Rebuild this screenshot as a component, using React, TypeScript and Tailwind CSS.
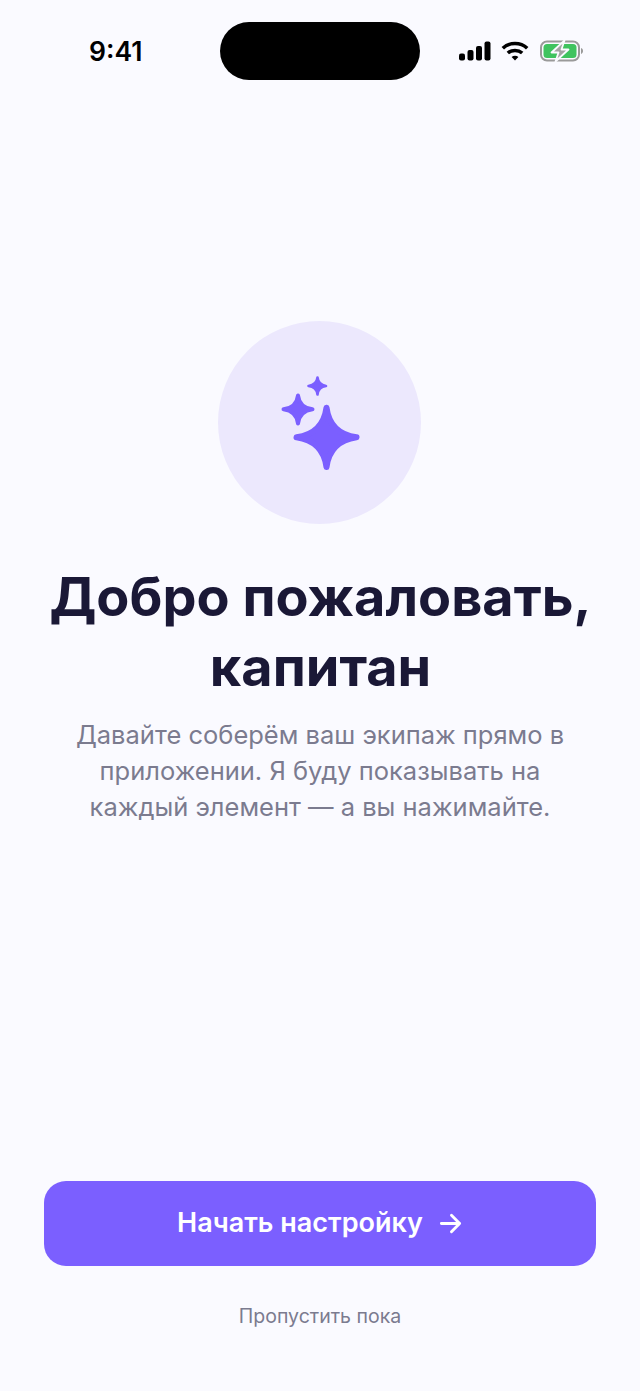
function SignalIcon() {
  return (
    <svg width="32" height="20" viewBox="0 0 32 20" fill="#000">
      <rect x="0" y="12.500" width="6" height="7" rx="2" />
      <rect x="8.500" y="9" width="6" height="10.500" rx="2" />
      <rect x="17" y="5" width="6" height="14.500" rx="2" />
      <rect x="25.500" y="0.500" width="6" height="19" rx="2" />
    </svg>
  );
}

function WifiIcon() {
  return (
    <svg width="28" height="20" viewBox="0 0 28 20" fill="none" stroke="#000" strokeWidth="3.600">
      <path d="M1.800 7.200C8.500 1 19.500 1 26.200 7.200" />
      <path d="M6.800 12C10.800 8.600 17.200 8.600 21.200 12" />
      <path d="M14 19.600L10.600 15.900C12.400 14.300 15.600 14.300 17.400 15.900Z" fill="#000" stroke="none" />
    </svg>
  );
}

function BatteryIcon() {
  return (
    <svg width="44" height="24" viewBox="0 0 44 24" fill="none">
      <rect x="1" y="2.500" width="38" height="19" rx="6" stroke="#9a9a9a" strokeWidth="2" />
      <rect x="3.500" y="5" width="33" height="14" rx="3.500" fill="#3fc35f" />
      <path d="M41 9C42.400 9.400 43 10.600 43 12C43 13.400 42.400 14.600 41 15Z" fill="#9a9a9a" />
      <path d="M24.500 1.500L11.500 13.500H18.500L15.500 22.500L28.500 10.500H21.500Z" fill="#a3a3a3" stroke="#fafaff" strokeWidth="1.800" strokeLinejoin="round" />
    </svg>
  );
}

function SparklesIcon() {
  return (
    <svg width="203" height="203" viewBox="0 0 203 203" fill="#7b5fff" stroke="#7b5fff" strokeLinejoin="round">
      <path strokeWidth="6" d="M108.500 86.700Q112 113 138.500 116.300Q112 120 108.500 146Q105 120 78.500 116.300Q105 113 108.500 86.700Z" />
      <path strokeWidth="4" d="M80 74.500Q81.500 87 94.500 88.300Q81.500 90 80 102.500Q78.500 90 65.500 88.300Q78.500 87 80 74.500Z" />
      <path strokeWidth="2.600" d="M99.500 56.500Q100.300 64 108 65Q100.300 66 99.500 73.500Q98.700 66 90.500 65Q98.700 64 99.500 56.500Z" />
    </svg>
  );
}

export default function App() {
  return (
    <div className="flex min-h-[1391px] flex-col bg-[#fafaff] font-['Inter',sans-serif]">
      <div className="flex items-center justify-between pl-[89px] pr-[56px] pt-[22px]">
        <span className="w-[55px] text-[26.500px] font-semibold leading-[58px] text-black">9:41</span>
        <div className="ml-[76px] h-[58px] w-[200px] rounded-[29px] bg-black" />
        <div className="ml-auto flex items-center">
          <SignalIcon />
          <div className="ml-[10px]">
            <WifiIcon />
          </div>
          <div className="ml-[11px]">
            <BatteryIcon />
          </div>
        </div>
      </div>

      <div className="flex flex-col items-center px-[40px]">
        <div className="mr-[1px] mt-[241px] h-[203px] w-[203px] rounded-full bg-[#ece8fd]">
          <SparklesIcon />
        </div>
        <h1 className="ml-[1px] mt-[38px] text-center text-[54px] font-bold leading-[70px] text-[#1a1836]">
          Добро пожаловать,
          <br />
          капитан
        </h1>
        <p className="mt-[15px] text-center text-[25.500px] leading-[36px] text-[#7b7b8f]">
          Давайте соберём ваш экипаж прямо в
          <br />
          приложении. Я буду показывать на
          <br />
          каждый элемент — а вы нажимайте.
        </p>
      </div>

      <div className="mt-auto flex flex-col items-center px-[44px] pb-[61px]">
        <button className="flex h-[85px] w-full items-center justify-center gap-[15px] rounded-[22px] bg-[#7b5fff] text-[27px] font-semibold text-white">
          Начать настройку
          <svg width="25" height="25" viewBox="0 0 26 26" fill="none" stroke="#fff" strokeWidth="3" strokeLinecap="round" strokeLinejoin="round">
            <path d="M3.500 13H22.500M14 4.500L22.500 13L14 21.500" />
          </svg>
        </button>
        <button className="mt-[36px] text-[19.500px] font-normal leading-[28px] text-[#7b7b8f]">Пропустить пока</button>
      </div>
    </div>
  );
}
